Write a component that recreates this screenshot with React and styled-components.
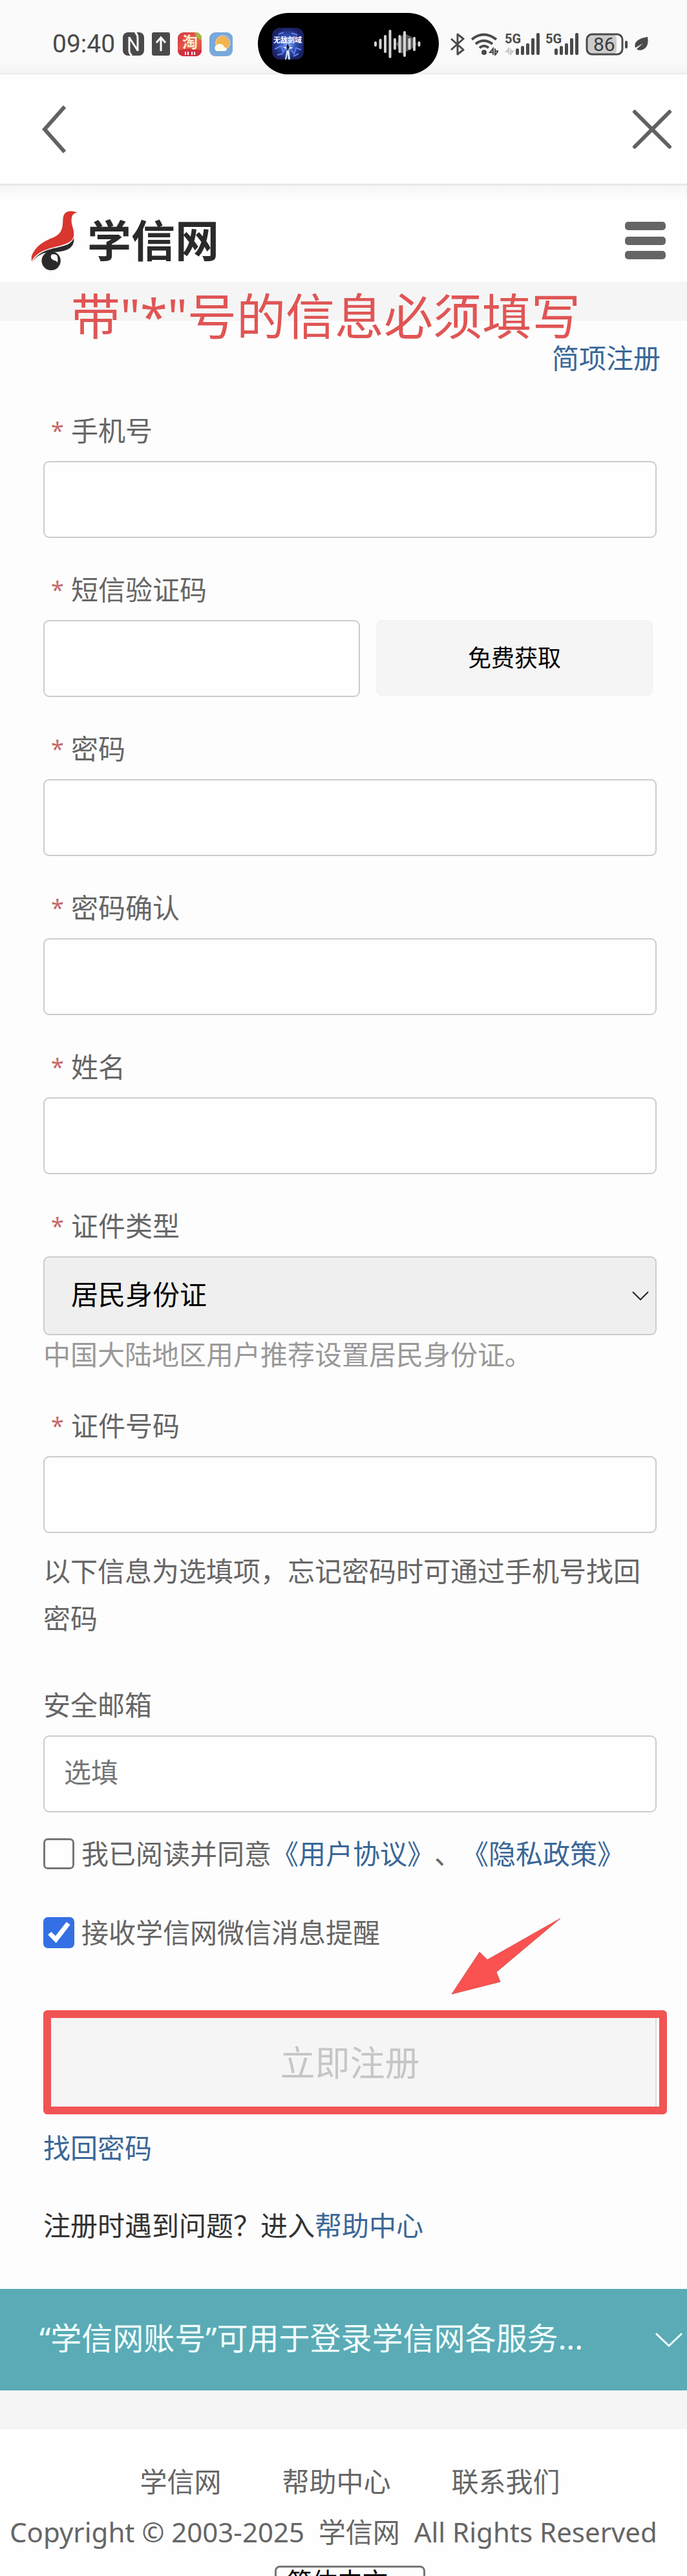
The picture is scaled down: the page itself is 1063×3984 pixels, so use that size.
import React, { useState } from 'react';
import styled, { createGlobalStyle } from 'styled-components';

const GlobalStyle = createGlobalStyle`
  * {
    box-sizing: border-box;
  }
  body {
    margin: 0;
    background: #fdfdfd;
    color: #666;
    font-family: 'Noto Sans', 'Noto Sans CJK SC', sans-serif;
    font-size: 42px;
    line-height: 60px;
    text-spacing-trim: space-all;
  }
  button, input, select {
    font-family: inherit;
    font-size: inherit;
    margin: 0;
  }
`;

const Page = styled.div`
  height: 100vh;
  overflow: hidden;
`;

// Phone status bar
const StatusBar = styled.div`
  display: flex;
  align-items: flex-end;
  height: 115px;
  padding: 0 60px 0 81px;
  background: linear-gradient(#fafafa 85%, #f4f4f4);
  border-bottom: 2px solid #ebebeb;
`;

const StatusGroup = styled.div`
  display: flex;
  align-items: center;
  gap: ${(props) => props.$gap}px;
  height: 90px;
`;

const Clock = styled.span`
  color: #4a4a4a;
  font-family: Roboto, sans-serif;
  font-size: 39px;
`;

const Island = styled.div`
  display: flex;
  align-items: center;
  justify-content: space-between;
  width: 280px;
  height: 95px;
  margin: 0 18px -2px auto;
  padding: 0 28px 0 22px;
  border-radius: 48px;
  background: #000;
`;

// Browser bar and site header
const Toolbar = styled.div`
  display: flex;
  align-items: center;
  justify-content: space-between;
  height: 169px;
  padding: 0 22px 0 62px;
  background: #fefefe;
`;

const IconButton = styled.button`
  display: flex;
  padding: 0;
  border: none;
  background: transparent;
  cursor: pointer;
`;

const SiteHeader = styled.header`
  display: flex;
  align-items: center;
  justify-content: space-between;
  height: 152px;
  padding: 20px 33px 0 47px;
  border-top: 3px solid #e8e8e8;
  background: linear-gradient(#f6f6f6, #fefefe 24px);
`;

const Brand = styled.a`
  display: flex;
  align-items: center;
  gap: 14px;
  color: #2a2a2a;
  font-size: 68px;
  font-weight: 700;
  text-decoration: none;
`;

const Band = styled.div`
  position: relative;
  height: 60px;
  background: #f5f5f5;
`;

const Notice = styled.strong`
  position: absolute;
  top: 8px;
  left: 110px;
  color: #e05555;
  font-size: 76px;
  font-weight: 400;
  line-height: 90px;
  white-space: nowrap;
`;

// Form
const Form = styled.form`
  padding: 28px 47px 68px 67px;
`;

const TextLink = styled.a`
  color: #3a6797;
  text-decoration: none;
`;

const TopLink = styled.div`
  display: flex;
  justify-content: flex-end;
  margin: 0 -6px 52px 0;
`;

const Field = styled.div`
  margin-bottom: ${(props) => props.$gap || 50}px;
`;

const Label = styled.label`
  display: flex;
  gap: 11px;
  margin-bottom: 17px;
  padding-left: ${(props) => (props.$required ? 12 : 0)}px;
`;

const Star = styled.span`
  width: 20px;
  color: #c46a6a;
  font-size: 36px;
`;

const Input = styled.input`
  display: block;
  width: 100%;
  height: 119px;
  padding: 0 30px 6px;
  border: 2px solid #ccc;
  border-radius: 9px;
  background: #fefefe;
  color: #333;
  outline: none;

  &::placeholder {
    color: #757575;
    opacity: 1;
  }
`;

const CodeRow = styled.div`
  display: flex;
  gap: 25px;
  padding-right: 6px;
`;

const CodeButton = styled.button`
  flex: 0 0 428px;
  height: 117px;
  padding-bottom: 6px;
  border: 1px solid #f0f0f0;
  border-radius: 9px;
  background: #f5f5f5;
  color: #000;
  font-size: 36px;
  cursor: pointer;
`;

const SelectBox = styled.div`
  position: relative;

  svg {
    position: absolute;
    top: 50%;
    right: 12px;
    margin-top: -7px;
    pointer-events: none;
  }
`;

const TypeSelect = styled.select`
  display: block;
  width: 100%;
  height: 122px;
  padding: 0 41px 6px;
  border: 2px solid #ccc;
  border-radius: 9px;
  background: #efefef;
  color: #000;
  appearance: none;
`;

const Hint = styled.p`
  margin: 0;
  color: #999;
`;

const OptionalText = styled.p`
  margin: -28px 0 68px;
  line-height: 73px;
`;

const CheckRow = styled.div`
  display: flex;
  align-items: center;
  gap: 11px;
  margin-bottom: 62px;
`;

const Checkbox = styled.input`
  display: block;
  flex: none;
  width: 48px;
  height: 48px;
  border: 3px solid #767676;
  border-radius: 7px;
  background: #fefefe;
  appearance: none;

  &:checked {
    border-color: #3470e4;
    background: #3470e4;
  }

  &:checked::after {
    content: '';
    display: block;
    width: 42px;
    height: 42px;
    background: #fff;
    clip-path: polygon(10% 58%, 22% 47%, 38% 62%, 78% 11%, 92% 21%, 40% 88%);
  }
`;

const SubmitBox = styled.div`
  position: relative;
  margin: 90px 0 22px;

  svg {
    position: absolute;
    top: -144px;
    right: 147px;
  }
`;

const SubmitButton = styled.button`
  display: block;
  width: 100%;
  height: 161px;
  padding-bottom: 6px;
  border: 2px solid #ddd;
  border-radius: 9px;
  background: #f5f5f5;
  color: #c6c6c6;
  font-size: 54px;
`;

const Highlight = styled.div`
  position: absolute;
  inset: 0 -16px 0 0;
  border: 12px solid #f15454;
  border-radius: 6px;
  pointer-events: none;
`;

const HelpLine = styled.p`
  margin: 60px 0 0;
  color: #333;
`;

// Account banner
const Banner = styled.button`
  display: flex;
  align-items: center;
  justify-content: space-between;
  width: 100%;
  height: 157px;
  padding: 0 6px 0 61px;
  border: none;
  background: #5aabb6;
  color: #f2ffff;
  font-size: 48px;
  text-align: left;
`;

const BannerText = styled.span`
  padding-bottom: 12px;
`;

const Footer = styled.footer`
  padding-top: 51px;
  background: #fefefe;
`;

const FooterLinks = styled.nav`
  display: flex;
  justify-content: center;
  gap: 94px;
  padding: 0 47px 0 67px;

  a {
    color: #666;
    text-decoration: none;
  }
`;

const Copyright = styled.p`
  margin: 18px 0 22px;
  padding-left: 15px;
  white-space: pre;
`;

const LanguageRow = styled.div`
  display: flex;
  justify-content: center;
  padding: 0 47px 0 67px;
`;

const LanguageSelect = styled.select`
  width: 233px;
  height: 48px;
  padding: 0 16px;
  border: 3px solid #767676;
  border-radius: 8px;
  background: #fefefe;
  color: #000;
  font-size: 39px;
  line-height: 40px;
  appearance: none;
`;

const NfcIcon = () => (
  <svg width="33" height="36" viewBox="0 0 33 36">
    <rect width="33" height="36" rx="8" fill="#4a4a4a" />
    <path d="M10 7v21q0 5 4 8M10 8l13 20M23 29V9q0-6-4-9" fill="none" stroke="#fafafa" strokeWidth="3" />
  </svg>
);

const UploadIcon = () => (
  <svg width="28" height="36" viewBox="0 0 28 36">
    <rect width="28" height="36" rx="3" fill="#4a4a4a" />
    <path d="M14 29V9M7 16l7-8 7 8" fill="none" stroke="#fff" strokeWidth="3" />
  </svg>
);

const TaobaoIcon = () => (
  <svg width="37" height="37" viewBox="0 0 37 37" overflow="visible">
    <defs>
      <linearGradient id="shop" x2="1" y2="1">
        <stop stopColor="#d33a45" />
        <stop offset=".6" stopColor="#e8624c" />
        <stop offset="1" stopColor="#dd3b3b" />
      </linearGradient>
      <clipPath id="shopClip"><rect width="37" height="37" rx="9" /></clipPath>
    </defs>
    <g clipPath="url(#shopClip)">
      <rect width="37" height="37" fill="url(#shop)" />
      <path d="M26 0h11v12Q29 10 26 0z" fill="#a8b548" />
      <path d="M0 28q18-5 37 0v10H0z" fill="#cf2f40" />
    </g>
    <text x="7" y="24" fontSize="24" fontWeight="700" fill="#ffeccb">淘</text>
    <path d="M12 30v5M16 30v5M22 30v5M26 30v5" stroke="#fff" strokeWidth="2" />
  </svg>
);

const WeatherIcon = () => (
  <svg width="36" height="37" viewBox="0 0 36 37">
    <rect width="36" height="37" rx="9" fill="#78a8dc" />
    <circle cx="20" cy="17" r="11" fill="#f3b450" />
    <circle cx="21" cy="16" r="11" fill="none" stroke="#f8dda5" />
    <path d="M11 29a5 5 0 0 1 0-9 7 7 0 0 1 12 3 3 3 0 0 1 1 6z" fill="#fffbe9" />
  </svg>
);

const GameIcon = () => (
  <svg width="49" height="49" viewBox="0 0 49 49">
    <defs>
      <radialGradient id="game">
        <stop stopColor="#8fb2ff" />
        <stop offset=".5" stopColor="#3250b8" />
        <stop offset="1" stopColor="#1b2263" />
      </radialGradient>
    </defs>
    <rect width="49" height="49" rx="12" fill="url(#game)" />
    <path d="M4 33l10-5 3 10 5-8M28 32l6 8 3-9 8 3M10 10l8-3M30 8l9 3M8 42l9-2M33 44l8-4" stroke="#5e82ec" strokeWidth="2" fill="none" />
    <path d="M24 24l3 5 6 2-7 2 2 16h-3l-1-9-2 9h-2l3-16-7-3 7-1z" fill="#dbe8ff" />
    <path d="M24 24l3 6-3 6-2-6z" fill="#14204e" />
    <text x="2" y="23" fontSize="11" fontWeight="700" fill="#fff">无敌剑域</text>
  </svg>
);

// Height of each bar in the voice meter
const waveBars = [8, 16, 28, 44, 18, 28, 40, 18, 22, 8];

const WaveIcon = () => (
  <svg width="72" height="46" viewBox="0 0 72 46">
    <path d="M34 23L46 6l12 6 8 11-10 9-14 6z" fill="#555" />
    {waveBars.map((height, index) => (
      <rect key={index} x={index * 7.5} y={23 - height / 2} width="4" height={height} rx="2" fill="#d4d4d4" />
    ))}
  </svg>
);

const BluetoothIcon = () => (
  <svg width="22" height="35" viewBox="0 0 22 35">
    <path d="M1 9l19 17-9 7V2l9 7L1 26" fill="none" stroke="#4a4a4a" strokeWidth="3" strokeLinejoin="round" />
  </svg>
);

const WifiIcon = () => (
  <svg width="42" height="35" viewBox="0 0 42 35">
    <g fill="none" stroke="#4a4a4a" strokeWidth="4">
      <path d="M1 10q18-15 38 0M7 17q12-10 26 0M13 23q7-6 14 0" />
    </g>
    <circle cx="20" cy="30" r="4" fill="#4a4a4a" />
    <path d="M34 34V24l-5 6h4M37 24v10l5-6h-4" fill="none" stroke="#4a4a4a" strokeWidth="2" />
  </svg>
);

const SignalIcon = ({ transfer }) => (
  <svg width={transfer ? 55 : 50} height="36" viewBox={transfer ? '0 0 55 36' : '5 0 50 36'} overflow="visible">
    <text x={transfer ? 0 : 3} y="17" fontSize="20" fontWeight="700" fontFamily="Liberation Sans Narrow, Roboto, sans-serif" fill="#4a4a4a">5G</text>
    {transfer && <path d="M6 34V25l-4 5h4M9 25v9l4-5H9" fill="none" stroke="#c8c8c8" strokeWidth="2" />}
    <g fill="#4a4a4a">
      <rect x="17" y="25" width="5" height="10" rx="2" />
      <rect x="25" y="21" width="5" height="14" rx="2" />
      <rect x="33" y="17" width="5" height="18" rx="2" />
      <rect x="41" y="9" width="5" height="26" rx="2" />
      <rect x="49" y="1" width="5" height="34" rx="2" />
    </g>
  </svg>
);

const BatteryIcon = () => (
  <svg width="65" height="35" viewBox="0 0 65 35">
    <rect x="2" y="2" width="46" height="31" rx="7" fill="#ccc" />
    <rect x="2" y="2" width="55" height="31" rx="8" fill="none" stroke="#4a4a4a" strokeWidth="3" />
    <rect x="61" y="12" width="4" height="12" rx="2" fill="#4a4a4a" />
    <text x="12" y="28" fontSize="30" fontFamily="Roboto, sans-serif" fill="#3c3c3c">86</text>
  </svg>
);

const LeafIcon = () => (
  <svg width="22" height="24" viewBox="0 0 22 24">
    <path d="M21 1q3 16-8 20-5 2-9-1l10-9L2 18Q-2 5 21 1z" fill="#4a4a4a" />
  </svg>
);

const BackIcon = () => (
  <svg width="40" height="76" viewBox="0 0 40 76">
    <path d="M38 3L7 38l31 35" fill="none" stroke="#626262" strokeWidth="6" />
  </svg>
);

const CloseIcon = () => (
  <svg width="64" height="64" viewBox="0 0 64 64">
    <path d="M5 5l54 54M59 5L5 59" stroke="#626262" strokeWidth="6" strokeLinecap="round" />
  </svg>
);

const MenuIcon = () => (
  <svg width="63" height="58" viewBox="0 0 63 58">
    <g fill="#656565">
      <rect width="63" height="13" rx="5" />
      <rect y="23" width="63" height="13" rx="5" />
      <rect y="45" width="63" height="13" rx="5" />
    </g>
  </svg>
);

const LogoIcon = () => (
  <svg width="74" height="92" viewBox="0 0 74 94">
    <path d="M74 3Q67 3 65 9c-3 11 3 18 3 28 0 13-14 16-29 20C20 62 9 66 1 80V72C9 52 25 47 36 42 57 32 47 14 53 5 58-1 66 0 74 3z" fill="#d9362f" />
    <path d="M1 82C13 63 30 61 46 57c14-3 19-7 22-14 1 14-8 20-25 22-17 1-28-1-42 17z" fill="#2a2a2a" />
    <circle cx="32" cy="79" r="15" fill="#2a2a2a" />
    <path d="M33 69c9-2 14 5 10 15-1-6-7-5-10-8-2-2-2-5 0-7z" fill="#fff" />
    <path d="M38 66c9 4 10 14 3 22 2-8 3-17-3-22z" fill="#2a2a2a" />
  </svg>
);

const ArrowIcon = () => (
  <svg width="172" height="122" viewBox="0 0 172 122">
    <path d="M2 119L45 54l12 12L170 2 71 85l6 15z" fill="#f95250" stroke="#d65a5a" strokeLinejoin="round" />
  </svg>
);

const TextField = ({ id, label, type = 'text' }) => (
  <Field>
    <Label htmlFor={id} $required><Star>*</Star>{label}</Label>
    <Input id={id} type={type} />
  </Field>
);

const App = () => {
  const [agreed, setAgreed] = useState(false);
  const [notify, setNotify] = useState(true);

  return (
    <Page>
      <GlobalStyle />
      <StatusBar>
        <StatusGroup $gap={12}>
          <Clock>09:40</Clock>
          <NfcIcon />
          <UploadIcon />
          <TaobaoIcon />
          <WeatherIcon />
        </StatusGroup>
        <Island>
          <GameIcon />
          <WaveIcon />
        </Island>
        <StatusGroup $gap={10}>
          <BluetoothIcon />
          <WifiIcon />
          <SignalIcon transfer />
          <SignalIcon />
          <BatteryIcon />
          <LeafIcon />
        </StatusGroup>
      </StatusBar>

      <Toolbar>
        <IconButton type="button" aria-label="返回"><BackIcon /></IconButton>
        <IconButton type="button" aria-label="关闭"><CloseIcon /></IconButton>
      </Toolbar>

      <SiteHeader>
        <Brand href="#"><LogoIcon />学信网</Brand>
        <IconButton type="button" aria-label="菜单"><MenuIcon /></IconButton>
      </SiteHeader>

      <Band>
        <Notice>带"*"号的信息必须填写</Notice>
      </Band>

      <Form onSubmit={(event) => event.preventDefault()}>
        <TopLink><TextLink href="#">简项注册</TextLink></TopLink>

        <TextField id="phone" label="手机号" type="tel" />
        <Field>
          <Label htmlFor="code" $required><Star>*</Star>短信验证码</Label>
          <CodeRow>
            <Input id="code" type="text" />
            <CodeButton type="button">免费获取</CodeButton>
          </CodeRow>
        </Field>
        <TextField id="password" label="密码" type="password" />
        <TextField id="confirm" label="密码确认" type="password" />
        <TextField id="name" label="姓名" />

        <Field>
          <Label htmlFor="idType" $required><Star>*</Star>证件类型</Label>
          <SelectBox>
            <TypeSelect id="idType">
              <option>居民身份证</option>
            </TypeSelect>
            <svg width="26" height="14" viewBox="0 0 26 14">
              <path d="M1 1l12 12L25 1" fill="none" stroke="#222" strokeWidth="2" />
            </svg>
          </SelectBox>
          <Hint>中国大陆地区用户推荐设置居民身份证。</Hint>
        </Field>
        <TextField id="idNumber" label="证件号码" />

        <OptionalText>以下信息为选填项，忘记密码时可通过手机号找回密码</OptionalText>

        <Field $gap={34}>
          <Label htmlFor="email">安全邮箱</Label>
          <Input id="email" type="email" placeholder="选填" />
        </Field>

        <CheckRow>
          <Checkbox id="agree" type="checkbox" checked={agreed} onChange={() => setAgreed(!agreed)} />
          <span>
            <label htmlFor="agree">我已阅读并同意</label>
            <TextLink href="#">《用户协议》</TextLink>、<TextLink href="#">《隐私政策》</TextLink>
          </span>
        </CheckRow>
        <CheckRow>
          <Checkbox id="notify" type="checkbox" checked={notify} onChange={() => setNotify(!notify)} />
          <label htmlFor="notify">接收学信网微信消息提醒</label>
        </CheckRow>

        <SubmitBox>
          <SubmitButton type="submit" disabled={!agreed}>立即注册</SubmitButton>
          <Highlight />
          <ArrowIcon />
        </SubmitBox>

        <TextLink href="#">找回密码</TextLink>
        <HelpLine>注册时遇到问题？进入<TextLink href="#">帮助中心</TextLink></HelpLine>
      </Form>

      <Banner type="button">
        <BannerText>“学信网账号”可用于登录学信网各服务...</BannerText>
        <svg width="44" height="24" viewBox="0 0 44 24">
          <path d="M2 2l20 19L42 2" fill="none" stroke="#f2ffff" strokeWidth="3" />
        </svg>
      </Banner>
      <Band />

      <Footer>
        <FooterLinks>
          <a href="#">学信网</a>
          <a href="#">帮助中心</a>
          <a href="#">联系我们</a>
        </FooterLinks>
        <Copyright>{'Copyright © 2003-2025  学信网  All Rights Reserved'}</Copyright>
        <LanguageRow>
          <LanguageSelect aria-label="语言">
            <option>简体中文</option>
          </LanguageSelect>
        </LanguageRow>
      </Footer>
    </Page>
  );
};

export default App;
